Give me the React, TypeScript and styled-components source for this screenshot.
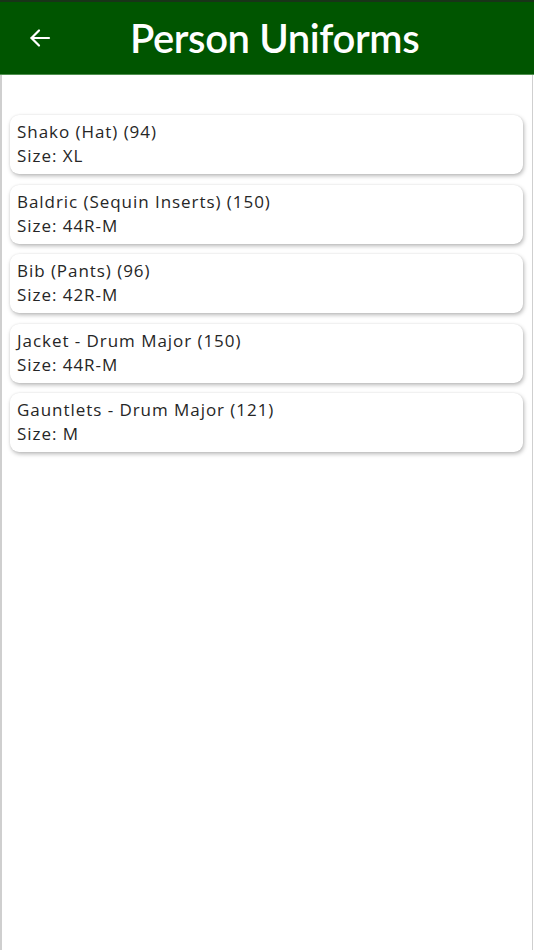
import React from "react";
import styled, { createGlobalStyle } from "styled-components";

const GlobalStyle = createGlobalStyle`
  html, body {
    margin: 0;
    padding: 0;
    background: #ffffff;
  }
  body {
    font-family: Lato, "Noto Sans", sans-serif;
  }
`;

const Screen = styled.div`
  width: 534px;
  height: 950px;
  display: flex;
  flex-direction: column;
  background: #ffffff;
  overflow: hidden;
`;

const Header = styled.header`
  height: 75px;
  flex: none;
  display: flex;
  align-items: center;
  background: #005500;
  border-top: 2px solid #183418;
  border-bottom: 1px solid #4f8f4f;
  box-sizing: border-box;
  color: #ffffff;
`;

const BackButton = styled.button`
  width: 78px;
  height: 100%;
  display: flex;
  align-items: center;
  justify-content: center;
  background: none;
  border: none;
  padding: 0 0 0 1px;
  color: #ffffff;
`;

const Title = styled.h1`
  margin: 0 0 0 52px;
  font-family: Lato, "Noto Sans", sans-serif;
  font-weight: 600;
  font-size: 40px;
  letter-spacing: -0.4px;
  line-height: 1;
`;

const Body = styled.main`
  flex: 1;
  display: flex;
  flex-direction: column;
  gap: 10.5px;
  padding: 40px 9px 0 8px;
  border-left: 2px solid #cfcfcf;
  border-right: 1px solid #cfcfcf;
  margin-right: 1px;
`;

const Card = styled.div`
  height: 59px;
  box-sizing: border-box;
  padding: 5px 7px;
  border-radius: 9px;
  background: #ffffff;
  box-shadow: 1px 2px 4px rgba(0, 0, 0, 0.28), 0 0 2px rgba(0, 0, 0, 0.08);
  display: flex;
  flex-direction: column;
  color: #262626;
  font-family: "Open Sans", "Noto Sans", sans-serif;
  font-size: 17px;
  line-height: 24px;
  font-weight: 500;
  letter-spacing: 0.95px;
`;

const Line = styled.span`
  white-space: nowrap;
`;

const uniforms = [
  { name: "Shako (Hat) (94)", size: "XL" },
  { name: "Baldric (Sequin Inserts) (150)", size: "44R-M" },
  { name: "Bib (Pants) (96)", size: "42R-M" },
  { name: "Jacket - Drum Major (150)", size: "44R-M" },
  { name: "Gauntlets - Drum Major (121)", size: "M" },
];

export default function App() {
  return (
    <>
      <GlobalStyle />
      <Screen>
        <Header>
          <BackButton aria-label="Back">
            <svg width="24" height="24" viewBox="0 0 24 24" fill="none" stroke="#ffffff" strokeWidth="2.2" strokeLinecap="round" strokeLinejoin="round">
              <path d="M21 12H3.5" />
              <path d="M11 4.5L3.5 12l7.5 7.5" />
            </svg>
          </BackButton>
          <Title>Person Uniforms</Title>
        </Header>
        <Body>
          {uniforms.map((u) => (
            <Card key={u.name}>
              <Line>{u.name}</Line>
              <Line>Size: {u.size}</Line>
            </Card>
          ))}
        </Body>
      </Screen>
    </>
  );
}
